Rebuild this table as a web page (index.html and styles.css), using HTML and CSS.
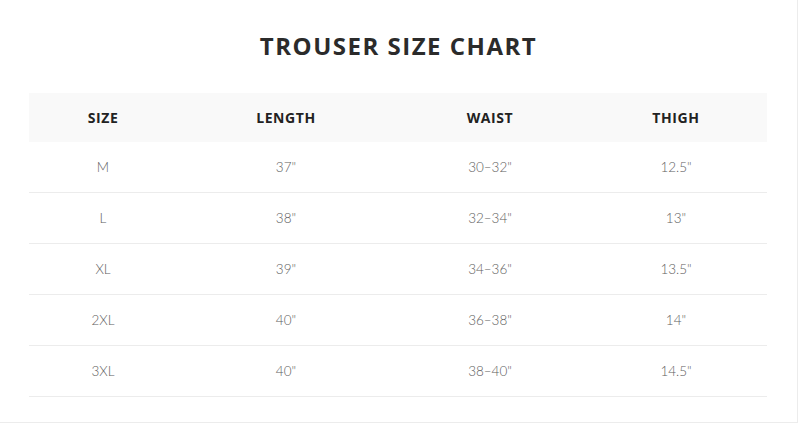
FILE: index.html
```html
<!DOCTYPE html>
<html>
<head>
<meta charset="utf-8">
<link rel="stylesheet" href="styles.css">
</head>
<body>
<div class="page">
  <h1 class="title">TROUSER SIZE CHART</h1>
  <table class="chart">
    <colgroup>
      <col class="c1"><col class="c2"><col class="c3"><col class="c4">
    </colgroup>
    <thead>
      <tr><th>SIZE</th><th>LENGTH</th><th>WAIST</th><th>THIGH</th></tr>
    </thead>
    <tbody>
      <tr><td>M</td><td>37"</td><td>30–32"</td><td>12.5"</td></tr>
      <tr><td>L</td><td>38"</td><td>32–34"</td><td>13"</td></tr>
      <tr><td>XL</td><td>39"</td><td>34–36"</td><td>13.5"</td></tr>
      <tr><td>2XL</td><td>40"</td><td>36–38"</td><td>14"</td></tr>
      <tr><td>3XL</td><td>40"</td><td>38–40"</td><td>14.5"</td></tr>
    </tbody>
  </table>
</div>
</body>
</html>
```
FILE: styles.css
```css
html, body {
  margin: 0;
  padding: 0;
  background: #fff;
}
.page {
  box-sizing: border-box;
  width: 798px;
  height: 423px;
  border-right: 1px solid #ececec;
  border-bottom: 1px solid #ececec;
  padding: 31px 0 0 29px;
  font-family: "Lato", "Open Sans", sans-serif;
}
.title {
  margin: 0 0 0 -29px;
  text-align: center;
  font-family: "Open Sans", sans-serif;
  font-weight: 700;
  font-size: 24px;
  line-height: 30px;
  color: #2b2b2b;
  letter-spacing: 1.5px;
}
.chart {
  margin-top: 32px;
  width: 738px;
  border-collapse: collapse;
  table-layout: fixed;
}
.c1 { width: 148px; }
.c2 { width: 218px; }
.c3 { width: 190px; }
.c4 { width: 182px; }
.chart thead tr {
  background: #f9f9f9;
}
.chart th {
  height: 49px;
  padding: 0;
  font-family: "Open Sans", sans-serif;
  font-weight: 700;
  font-size: 14px;
  color: #222;
  text-align: center;
  letter-spacing: 0.6px;
}
.chart td {
  height: 50px;
  padding: 0;
  border-bottom: 1px solid #ececec;
  text-align: center;
  font-weight: 300;
  font-size: 13.5px;
  color: #5e5e5e;
}
```
